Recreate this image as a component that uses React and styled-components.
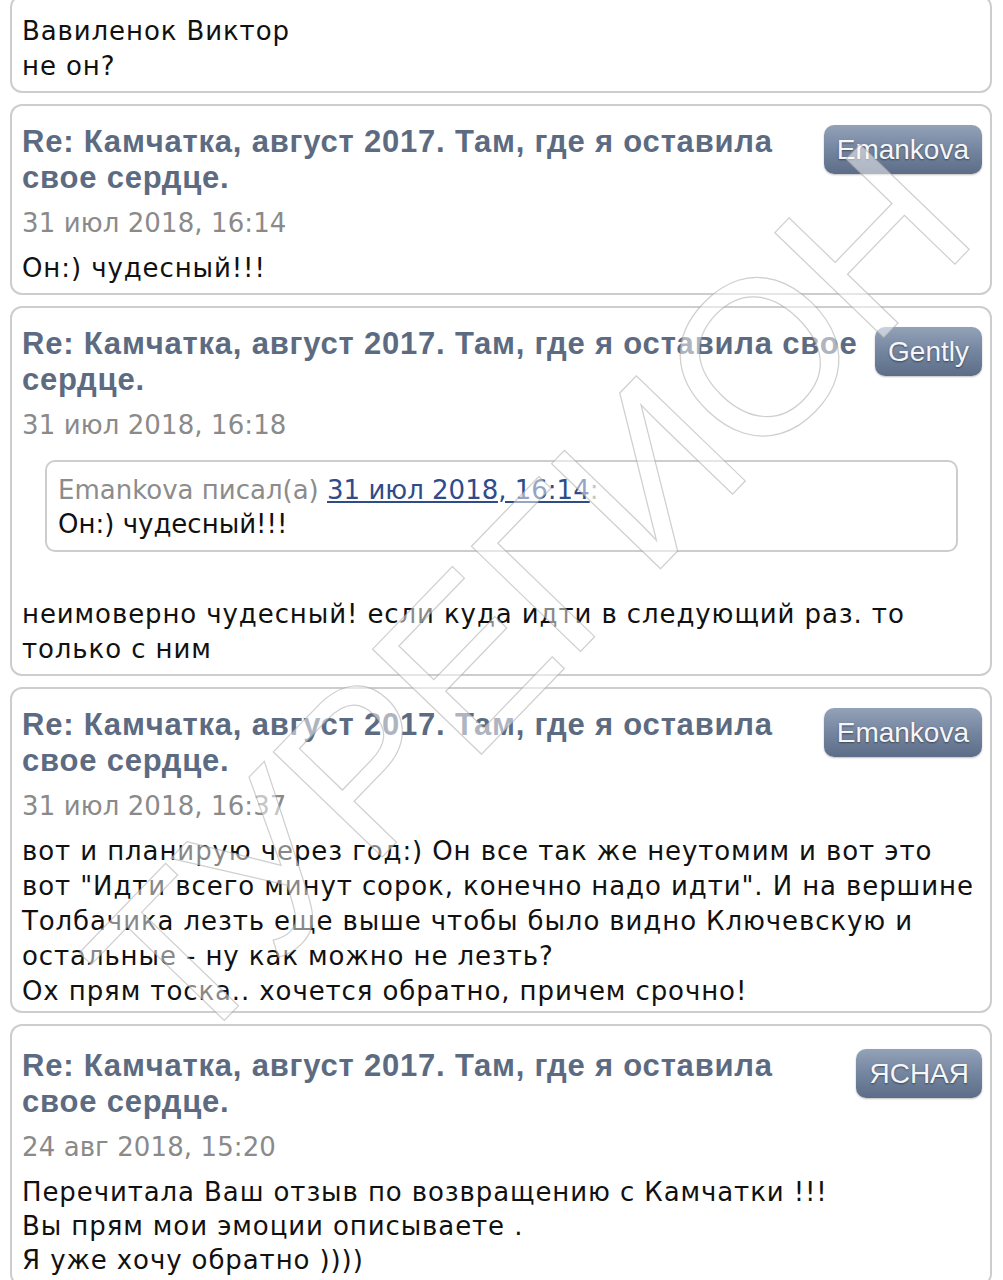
import React from "react";
import styled, { createGlobalStyle } from "styled-components";

const GlobalStyle = createGlobalStyle`
  html, body {
    margin: 0;
    padding: 0;
    background: #ffffff;
  }
  body {
    font-family: "DejaVu Sans", Verdana, sans-serif;
    color: #111111;
    overflow: hidden;
  }
`;

const posts = [
  {
    id: 2,
    author: "Emankova",
    date: "31 июл 2018, 16:14",
    body: ["Он:) чудесный!!!"],
  },
  {
    id: 3,
    author: "Gently",
    date: "31 июл 2018, 16:18",
    quote: {
      author: "Emankova",
      date: "31 июл 2018, 16:14",
      text: "Он:) чудесный!!!",
    },
    body: ["неимоверно чудесный! если куда идти в следующий раз. то только с ним"],
  },
  {
    id: 4,
    author: "Emankova",
    date: "31 июл 2018, 16:37",
    padBottom: 2,
    body: [
      'вот и планирую через год:) Он все так же неутомим и вот это вот "Идти всего минут сорок, конечно надо идти". И на вершине Толбачика лезть еще выше чтобы было видно Ключевскую и остальные - ну как можно не лезть?',
      "Ох прям тоска.. хочется обратно, причем срочно!",
    ],
  },
  {
    id: 5,
    author: "ЯСНАЯ",
    date: "24 авг 2018, 15:20",
    padTop: 22,
    lineHeight: 34,
    body: [
      "Перечитала Ваш отзыв по возвращению с Камчатки !!!",
      "Вы прям мои эмоции описываете .",
      "Я уже хочу обратно ))))",
    ],
  },
];

const TITLE = "Re: Камчатка, август 2017. Там, где я оставила свое сердце.";

const App = () => {
  return (
    <>
      <GlobalStyle />
      <Page>
        <Card $first $padTop={17}>
          <Body>
            <p>Вавиленок Виктор</p>
            <p>не он?</p>
          </Body>
        </Card>
        {posts.map((post) => (
          <Card key={post.id} $padTop={post.padTop} $padBottom={post.padBottom}>
            <Header>
              <Title>{TITLE}</Title>
              <Badge>{post.author}</Badge>
            </Header>
            <PostDate>{post.date}</PostDate>
            {post.quote && (
              <Quote>
                <QuoteMeta>
                  {post.quote.author} писал(а) <a href="#">{post.quote.date}</a>:
                </QuoteMeta>
                <QuoteText>{post.quote.text}</QuoteText>
              </Quote>
            )}
            <Body $lineHeight={post.lineHeight}>
              {post.body.map((line, i) => (
                <p key={i}>{line}</p>
              ))}
            </Body>
          </Card>
        ))}
        <Watermark viewBox="0 0 1003 1280" aria-hidden="true">
          <text
            x="0"
            y="0"
            transform="translate(540 610) rotate(-46)"
            textAnchor="middle"
            dominantBaseline="middle"
          >
            ТУРЕГИОН
          </text>
        </Watermark>
      </Page>
    </>
  );
};

const Page = styled.div`
  position: relative;
  display: flex;
  flex-direction: column;
  gap: 11px;
  padding: 0 11px 0 10px;
  height: 1280px;
  overflow: hidden;
`;

const Card = styled.div`
  border: 2px solid #cdcdcd;
  border-radius: 12px;
  padding: ${(p) => p.$padTop ?? 18}px 8px ${(p) => p.$padBottom ?? 7}px 10px;
  margin-top: ${(p) => (p.$first ? "-5px" : "0")};
  background: #ffffff;
  flex-shrink: 0;
`;

const Header = styled.div`
  display: flex;
  align-items: flex-start;
  justify-content: space-between;
  gap: 12px;
  margin-bottom: 10px;
`;

const Title = styled.h3`
  margin: 0;
  flex: 1;
  font-family: "Liberation Sans", Arial, sans-serif;
  font-weight: bold;
  font-size: 31px;
  letter-spacing: 0.8px;
  line-height: 36px;
  color: #5c6b81;
`;

const Badge = styled.div`
  flex-shrink: 0;
  margin-top: 1px;
  padding: 0 13px;
  height: 49px;
  display: flex;
  align-items: center;
  border-radius: 10px;
  background: linear-gradient(to bottom, #93a2b8 0%, #7485a0 50%, #5d6d87 100%);
  box-shadow: 0 1px 2px rgba(0, 0, 0, 0.25);
  font-family: "Liberation Sans", Arial, sans-serif;
  font-size: 28px;
  color: #f4f6f9;
  text-shadow: 0 1px 2px rgba(0, 0, 0, 0.45);
`;

const PostDate = styled.div`
  font-size: 26px;
  line-height: 35px;
  color: #8a8a8a;
  margin-bottom: 10px;
  letter-spacing: 0.1px;
`;

const Quote = styled.div`
  margin: 17px 24px 45px 23px;
  border: 2px solid #cdcdcd;
  border-radius: 10px;
  padding: 11px 12px 9px 11px;
  font-size: 26px;
  line-height: 34px;
`;

const QuoteMeta = styled.div`
  color: #8c8c8c;

  a {
    color: #2f4b8a;
    text-decoration: underline;
  }
`;

const QuoteText = styled.div`
  color: #111111;
`;

const Body = styled.div`
  font-size: 26px;
  line-height: ${(p) => p.$lineHeight ?? 35}px;
  letter-spacing: 0.9px;
  color: #111111;

  p {
    margin: 0;
  }
`;

const Watermark = styled.svg`
  position: absolute;
  inset: 0;
  width: 1003px;
  height: 1280px;
  pointer-events: none;

  text {
    font-family: "Liberation Sans", Arial, sans-serif;
    font-size: 220px;
    letter-spacing: -4px;
    fill: rgba(255, 255, 255, 0.5);
    stroke: rgba(160, 160, 160, 0.5);
    stroke-width: 1.2px;
  }
`;

export default App;
